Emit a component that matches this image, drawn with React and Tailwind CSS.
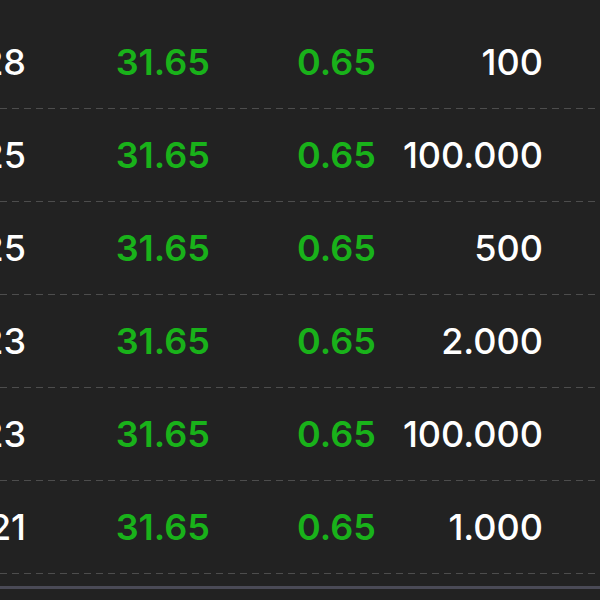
import React from "react";

const rows = [
  ["28", "100"],
  ["25", "100.000"],
  ["25", "500"],
  ["23", "2.000"],
  ["23", "100.000"],
  ["21", "1.000"],
];

export default function App() {
  return (
    <div
      className="w-[600px] h-[600px] bg-[#222222] overflow-hidden flex flex-col"
      style={{ fontFamily: "Inter, 'Noto Sans', sans-serif" }}
    >
      <div className="pt-[16px] flex flex-col">
        {rows.map(([a, q], i) => (
          <div key={i} className="flex flex-col">
            <div className="h-[92px] flex items-center text-[36px] leading-none">
              <div className="w-[60px] ml-[-34px] shrink-0 text-right text-white font-medium">{a}</div>
              <div className="w-[184px] shrink-0 text-right text-[#19b21a] font-semibold">31.65</div>
              <div className="w-[166px] shrink-0 text-right text-[#19b21a] font-semibold">0.65</div>
              <div className="w-[167px] shrink-0 text-right text-white font-medium">{q}</div>
            </div>
            <div className="h-[1px] bg-[repeating-linear-gradient(to_right,#4d4d4d_0_7px,transparent_7px_12px)]"></div>
          </div>
        ))}
      </div>
      <div className="mt-[12px] h-[3px] bg-[#4a4a56]"></div>
    </div>
  );
}
